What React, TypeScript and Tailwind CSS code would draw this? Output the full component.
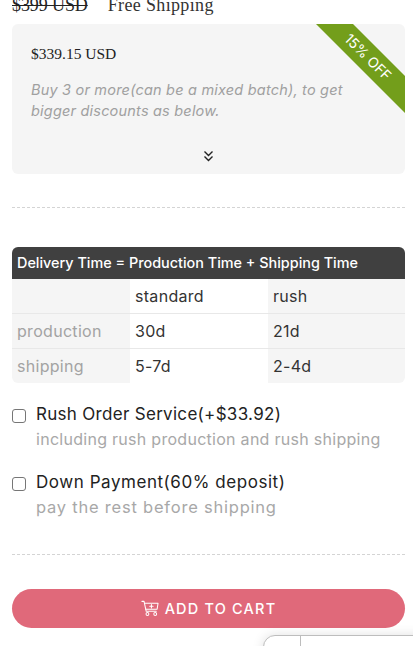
import React from "react";

const sans = "font-['Inter','Open_Sans',sans-serif]";

function Row({ label, a, b, border, h }: { label: string; a: string; b: string; border?: boolean; h: string }) {
  const line = border ? "border-t border-[#e8e8e8]" : "";
  return (
    <div className={`grid grid-cols-[118px_138px_137px] ${h} text-[16px] tracking-[0.3px]`}>
      <div className={`bg-[#f5f5f5] pl-[5px] flex items-center text-[#a3a3a3] ${line}`}>{label}</div>
      <div className={`bg-white pl-[5px] flex items-center text-[#333] ${line}`}>{a}</div>
      <div className={`bg-[#f5f5f5] pl-[5px] flex items-center text-[#333] ${line}`}>{b}</div>
    </div>
  );
}

function Option({ title, sub, className, titleClass, subClass }: { title: string; sub: string; className: string; titleClass: string; subClass: string }) {
  return (
    <div className={`flex items-start gap-[10px] ${className}`}>
      <span className="mt-[6px] w-[14px] h-[14px] shrink-0 rounded-[3px] border border-[#767676] bg-white" />
      <div>
        <div className={`text-[17px] leading-[22px] text-[#222] ${titleClass}`}>{title}</div>
        <div className={`mt-[3px] leading-[22px] text-[#a8a8a8] ${subClass}`}>{sub}</div>
      </div>
    </div>
  );
}

export default function App() {
  return (
    <div className={`relative w-[413px] h-[646px] overflow-hidden bg-white ${sans}`}>
      <div className="pl-[12px] pr-[8px] -mt-[14px]">
        <div className="h-[38px] flex items-center gap-[20px] font-['Liberation_Serif',serif] text-[18px] text-[#333]">
          <span className="line-through text-[#222] tracking-[-0.1px]">$399 USD</span>
          <span className="tracking-[0.35px]">Free Shipping</span>
        </div>

        <div className="relative h-[150px] rounded-[6px] bg-[#f5f5f5] overflow-hidden pt-[20px] px-[19px]">
          <div className="font-['Liberation_Serif',serif] text-[15.5px] leading-[20px] text-[#222]">$339.15 USD</div>
          <p className="mt-[15px] italic text-[14.5px] leading-[21px] text-[#a0a0a0] tracking-[0.2px] w-[325px]">
            Buy 3 or more(can be a mixed batch), to get bigger discounts as below.
          </p>
          <svg className="absolute left-[190px] top-[126px]" width="13" height="13" viewBox="0 0 13 13" fill="none" stroke="#222" strokeWidth="1.4">
            <path d="M2.5 1.5 6.5 5.5 10.5 1.5" />
            <path d="M2.5 6.5 6.5 10.5 10.5 6.5" />
          </svg>
          <div className="absolute left-[304px] top-0 w-[89px] h-[89px] bg-[#739e1b] [clip-path:polygon(0_0,37px_0,89px_52px,89px_89px)]" />
          <div className="absolute left-[326px] top-[25px] w-[60px] text-center rotate-45 text-[14px] leading-[16px] text-white whitespace-nowrap">15% OFF</div>
        </div>

        <div className="mt-[33px] border-t border-dashed border-[#d4d4d4]" />

        <div className="mt-[39px] rounded-[6px] overflow-hidden">
          <div className="h-[32px] bg-[#404040] pl-[5px] flex items-center text-white text-[14.4px] font-medium whitespace-nowrap">
            Delivery Time = Production Time + Shipping Time
          </div>
          <Row h="h-[34px]" label="" a="standard" b="rush" />
          <Row h="h-[35px]" label="production" a="30d" b="21d" border />
          <Row h="h-[35px]" label="shipping" a="5-7d" b="2-4d" border />
        </div>

        <Option className="mt-[20px]" titleClass="tracking-[0.3px]" subClass="text-[16px] tracking-[0.28px]" title="Rush Order Service(+$33.92)" sub="including rush production and rush shipping" />
        <Option className="mt-[21px]" titleClass="tracking-[0.55px]" subClass="text-[16.5px] tracking-[0.78px]" title="Down Payment(60% deposit)" sub="pay the rest before shipping" />

        <div className="mt-[36px] border-t border-dashed border-[#d4d4d4]" />

        <button className="mt-[34px] w-full h-[39px] rounded-full bg-[#e0697a] text-white flex items-center justify-center gap-[6px] text-[14.5px] font-medium tracking-[1.2px]">
          <svg width="18" height="17" viewBox="0 0 19 17" fill="none" stroke="#fff" strokeWidth="1.1" strokeLinecap="round" strokeLinejoin="round">
            <path d="M1 1h2.2l2.3 10.5h10.6" />
            <path d="M3.8 3h14.2l-1 6.3H5.1" />
            <path d="M11 4.3v3.6M9.2 6.1h3.6" />
            <circle cx="6.8" cy="14.3" r="1.5" />
            <circle cx="15" cy="14.3" r="1.5" />
          </svg>
          ADD TO CART
        </button>
      </div>

      <div className="absolute left-[263px] top-[635px] w-[170px] h-[30px] rounded-tl-[12px] border border-[#bdbdbd] bg-white shadow-[0_0_12px_rgba(0,0,0,0.12)]">
        <div className="ml-[36px] h-full w-px bg-[#bdbdbd]" />
      </div>
    </div>
  );
}
